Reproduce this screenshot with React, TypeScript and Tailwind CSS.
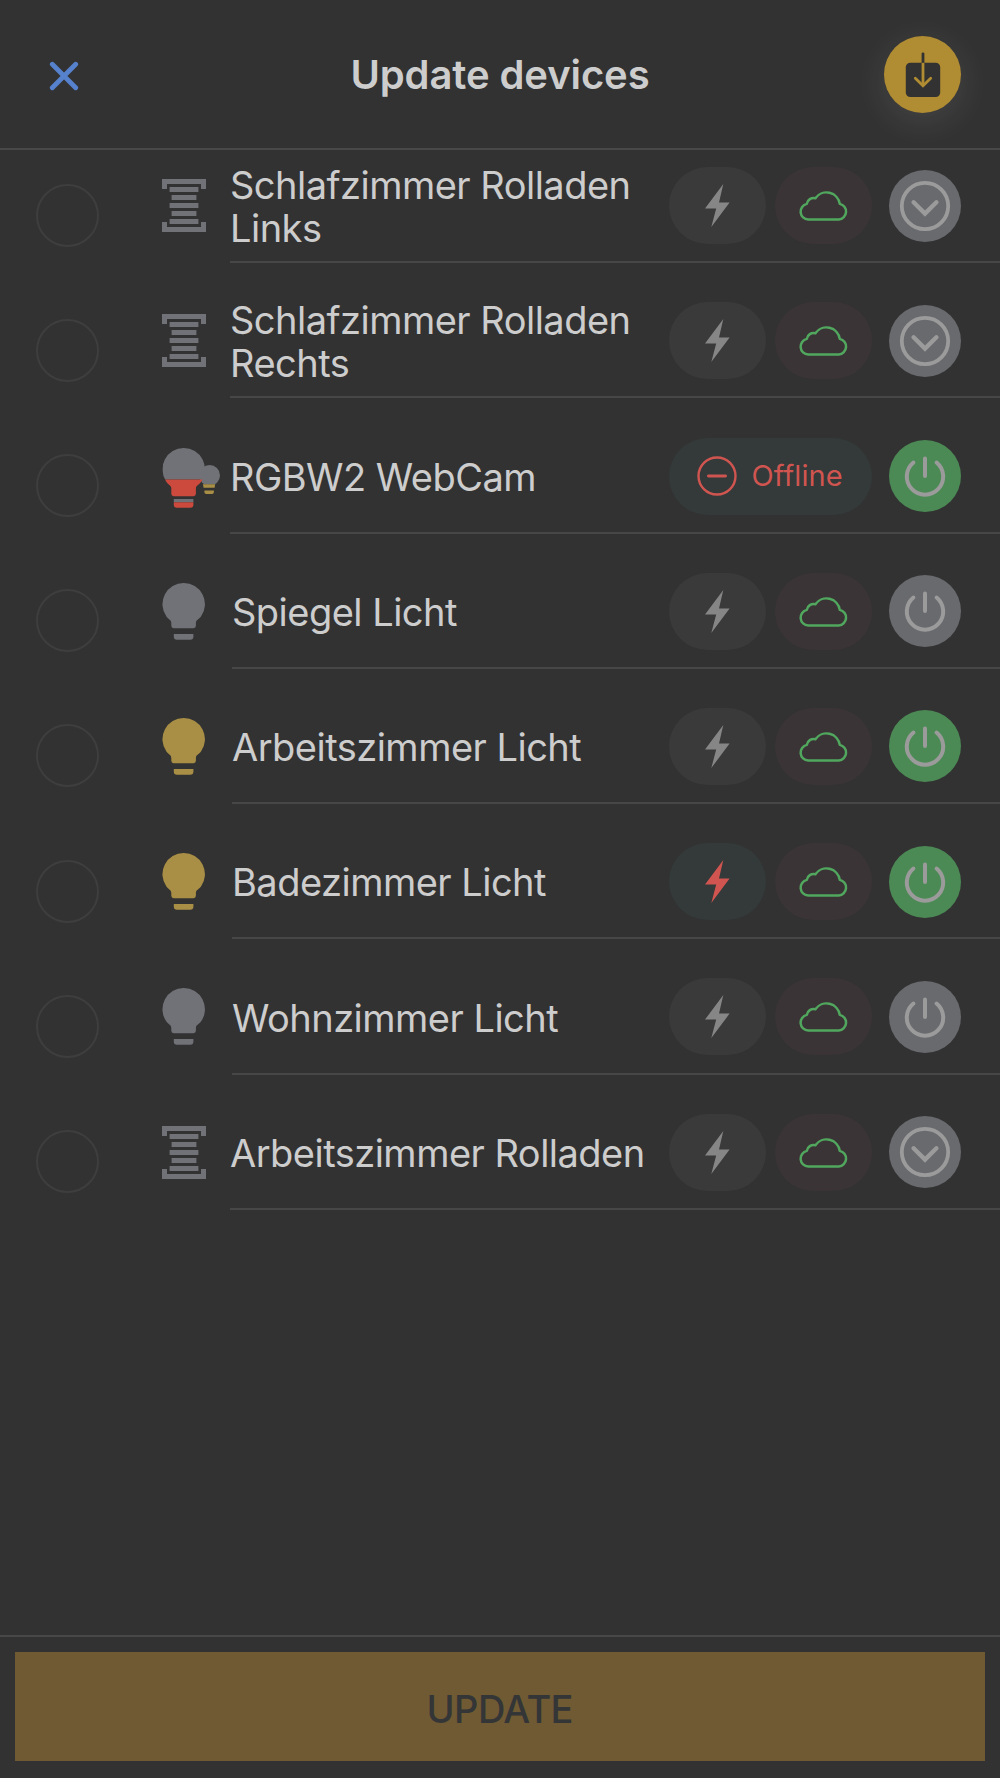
import { useState } from 'react'

type IconKind = 'shutter' | 'bulb' | 'rgbw'

interface Device {
  id: number
  name: string
  icon: IconKind
  on?: boolean
  offline?: boolean
  alert?: boolean
}

const devices: Device[] = [
  { id: 1, name: 'Schlafzimmer Rolladen Links', icon: 'shutter' },
  { id: 2, name: 'Schlafzimmer Rolladen Rechts', icon: 'shutter' },
  { id: 3, name: 'RGBW2 WebCam', icon: 'rgbw', on: true, offline: true },
  { id: 4, name: 'Spiegel Licht', icon: 'bulb' },
  { id: 5, name: 'Arbeitszimmer Licht', icon: 'bulb', on: true },
  { id: 6, name: 'Badezimmer Licht', icon: 'bulb', on: true, alert: true },
  { id: 7, name: 'Wohnzimmer Licht', icon: 'bulb' },
  { id: 8, name: 'Arbeitszimmer Rolladen', icon: 'shutter' },
]

const BULB_PATH =
  'M21.3 0A21.2 21.2 0 0 1 38.6 33.5C36.5 36.2 33.5 37 33.5 40V42.8Q33.5 45.2 31 45.2H11.3Q8.9 45.2 8.9 42.8V40C8.9 37 6 36.2 4 33.5A21.2 21.2 0 0 1 21.3 0Z'

function ShutterIcon() {
  return (
    <svg width="44" height="53" viewBox="0 0 44 53" fill="#717277">
      <path d="M0 0H44V10H39V5H5V10H0Z" />
      <path d="M0 53H44V43H39V48H5V43H0Z" />
      <rect x="7.6" y="8" width="28.8" height="5" />
      <rect x="9.6" y="16" width="24.8" height="5" />
      <rect x="7.6" y="24" width="28.8" height="5" />
      <rect x="9.6" y="32" width="24.8" height="5" />
      <rect x="7.6" y="40" width="28.8" height="5" />
    </svg>
  )
}

function BulbIcon({ on }: { on?: boolean }) {
  return (
    <svg
      width="43"
      height="57"
      viewBox="0 0 43 57"
      className={`shrink-0 ${on ? 'fill-[#a98f45]' : 'fill-[#717277]'}`}
    >
      <g transform="translate(0.4 0)">
        <path d={BULB_PATH} />
        <path d="M11.4 51H31V53.6Q31 56.8 27.8 56.8H14.6Q11.4 56.8 11.4 53.6Z" />
      </g>
    </svg>
  )
}

function RgbwIcon() {
  return (
    <svg width="58" height="57" viewBox="-0.4 0 58 57" className="shrink-0 overflow-visible">
      <defs>
        <clipPath id="bulb-top">
          <rect x="0" y="0" width="58" height="31.4" />
        </clipPath>
        <clipPath id="small-top">
          <rect x="30" y="10" width="30" height="26.3" />
        </clipPath>
      </defs>
      <circle cx="47.2" cy="27.4" r="10.4" fill="#717277" clipPath="url(#small-top)" />
      <path d="M40.5 36.3H52.8L52.2 39.8H41.2Z" fill="#a98f45" />
      <path d="M42 42.4H51.5V44Q51.5 45.9 49.6 45.9H43.9Q42 45.9 42 44Z" fill="#a98f45" />
      <path d={BULB_PATH} fill="#717277" clipPath="url(#bulb-top)" />
      <path
        d="M2.7 31.4H40C38.6 36 33.5 37 33.5 40V45.8Q33.5 48.2 31 48.2H11.3Q8.9 48.2 8.9 45.8V40C8.9 37 4.2 36 2.7 31.4Z"
        fill="#cb4a3d"
      />
      <rect x="11.4" y="51" width="19.6" height="3.2" fill="#717277" />
      <path d="M11.4 54.2H31V56.8Q31 59.8 28 59.8H14.4Q11.4 59.8 11.4 56.8Z" fill="#cb4a3d" />
    </svg>
  )
}

function BoltIcon({ alert }: { alert?: boolean }) {
  return (
    <svg
      width="25"
      height="43"
      viewBox="0 0 25 43"
      className={alert ? 'fill-[#d05550]' : 'fill-[#868686]'}
    >
      <path d="M18.3 0L0 24.6H11.2L6.3 43L24.6 18.6H14Z" />
    </svg>
  )
}

function CloudIcon() {
  return (
    <svg width="49" height="31" viewBox="0 0 49 31" fill="none" stroke="#50a75d" strokeWidth="2.5">
      <path
        d="M9.2 29.5A7.9 7.9 0 0 1 7.8 13.9A6.9 6.9 0 0 1 16.4 8.2A13.5 13.5 0 0 1 40.8 13.9A7.9 7.9 0 0 1 39.8 29.5Z"
        strokeLinejoin="round"
      />
    </svg>
  )
}

function DeviceIcon({ device }: { device: Device }) {
  if (device.icon === 'shutter') return <ShutterIcon />
  if (device.icon === 'rgbw') return <RgbwIcon />
  return <BulbIcon on={device.on} />
}

function ActionButton({ device }: { device: Device }) {
  return (
    <button
      className={`flex size-[72px] shrink-0 items-center justify-center rounded-full ${
        device.on ? 'bg-[#4c8a55]' : 'bg-[#696a6e]'
      }`}
    >
      {device.icon === 'shutter' ? (
        <svg width="52" height="52" viewBox="-26 -26 52 52" fill="none" stroke="#9b9b9b">
          <circle r="23.2" strokeWidth="3.8" />
          <path d="M-11.4 -3.7L0 7.6L11.4 -3.7" strokeWidth="4.4" strokeLinecap="round" />
        </svg>
      ) : (
        <svg
          width="52"
          height="52"
          viewBox="-26 -26 52 52"
          fill="none"
          stroke="#9b9b9b"
          strokeWidth="4"
          strokeLinecap="round"
        >
          <path d="M-11.6 -13.5A18.2 18.2 0 1 0 11.6 -13.5" />
          <path d="M0 -17.6V0" />
        </svg>
      )}
    </button>
  )
}

function DeviceStatus({ device }: { device: Device }) {
  if (device.offline) {
    return (
      <div className="flex h-[77px] w-[203.5px] items-center gap-[15px] rounded-full bg-[#333a39] pl-[28px] text-[#d05550]">
        <svg width="40" height="40" viewBox="-20 -20 40 40" fill="none" stroke="currentColor">
          <circle r="18.5" strokeWidth="2.4" />
          <path d="M-8.6 0H8.6" strokeWidth="2.8" strokeLinecap="round" />
        </svg>
        <span className="text-[29px] tracking-[0.1px]">Offline</span>
      </div>
    )
  }
  return (
    <div className="flex gap-[9.5px]">
      <div
        className={`flex h-[77px] w-[97px] items-center justify-center rounded-full ${
          device.alert ? 'bg-[#333a39]' : 'bg-[#3a3a3a]'
        }`}
      >
        <BoltIcon alert={device.alert} />
      </div>
      <div className="flex h-[77px] w-[97px] items-center justify-center rounded-full bg-[#3b3437]">
        <CloudIcon />
      </div>
    </div>
  )
}

export default function App() {
  const [selected, setSelected] = useState<number[]>([])

  const toggle = (id: number) => {
    setSelected((prev) => (prev.includes(id) ? prev.filter((s) => s !== id) : [...prev, id]))
  }

  return (
    <div className="flex h-[1778px] w-[1000px] flex-col overflow-hidden bg-[#323232] font-['Inter',sans-serif] text-[#cdcdcd]">
      {/* Header */}
      <header className="z-10 grid h-[150px] shrink-0 grid-cols-[1fr_auto_1fr] items-center border-b-2 border-[#484848] bg-[#323232] px-[39px]">
        <button className="mt-1 ml-[10px] justify-self-start" aria-label="Close">
          <svg
            width="30"
            height="30"
            viewBox="0 0 30 30"
            stroke="#5681cd"
            strokeWidth="4.8"
            strokeLinecap="round"
          >
            <path d="M3.3 3.3L26.7 26.7M26.7 3.3L3.3 26.7" />
          </svg>
        </button>
        <h1 className="mt-[2px] text-[40px] font-semibold tracking-[-0.1px]">Update devices</h1>
        <button
          className="mt-px flex size-[77px] items-center justify-center justify-self-end rounded-full bg-[#b08c32] shadow-[0_8px_36px_rgba(255,255,255,0.1)]"
          aria-label="Download"
        >
          <svg width="36" height="46" viewBox="0 0 36 46" fill="none" strokeLinecap="round">
            <rect x="0.8" y="10.8" width="34.4" height="34.2" rx="4.5" fill="#323232" />
            <path d="M18 1.8V10.8" stroke="#323232" strokeWidth="2.8" />
            <path d="M18 10.8V33.5" stroke="#b08c32" strokeWidth="2.8" strokeLinecap="butt" />
            <path d="M10.3 26.2L18 33.7L25.7 26.2" stroke="#b08c32" strokeWidth="2.8" />
          </svg>
        </button>
      </header>

      {/* Device list, scrolled slightly under the header */}
      <main className="-mt-[22px] flex-1 overflow-hidden">
        {devices.map((device) => (
          <div key={device.id} className="flex h-[135.23px] pl-[36px]">
            <button
              onClick={() => toggle(device.id)}
              className={`mt-[55.5px] size-[63px] shrink-0 rounded-full border-2 border-[#3e3e3e] ${
                selected.includes(device.id) ? 'bg-[#b08c32]' : ''
              }`}
              aria-label={device.name}
            />
            <div className="ml-[62.5px] flex w-[44px] shrink-0 items-center pt-[20px]">
              <DeviceIcon device={device} />
            </div>
            <div
              className={`flex flex-1 items-center border-b-2 border-[#474747] pt-[22px] pr-[39px] ${
                device.icon === 'bulb' ? 'ml-[26.5px]' : 'ml-[24.5px]'
              }`}
            >
              <span className="w-0 flex-1 pt-[3px] text-[38px] leading-[43.6px] tracking-[-0.52px]">
                {device.name}
              </span>
              <DeviceStatus device={device} />
              <div className="ml-[17px]">
                <ActionButton device={device} />
              </div>
            </div>
          </div>
        ))}
      </main>

      {/* Footer */}
      <footer className="h-[143px] shrink-0 border-t-2 border-[#484848] pt-[15px] pr-[15px] pl-[14.5px]">
        <button className="h-[109px] w-full bg-[#6f5a33] pt-[5px] text-[38px] font-medium tracking-[-0.6px] text-[#333536]">
          UPDATE
        </button>
      </footer>
    </div>
  )
}
